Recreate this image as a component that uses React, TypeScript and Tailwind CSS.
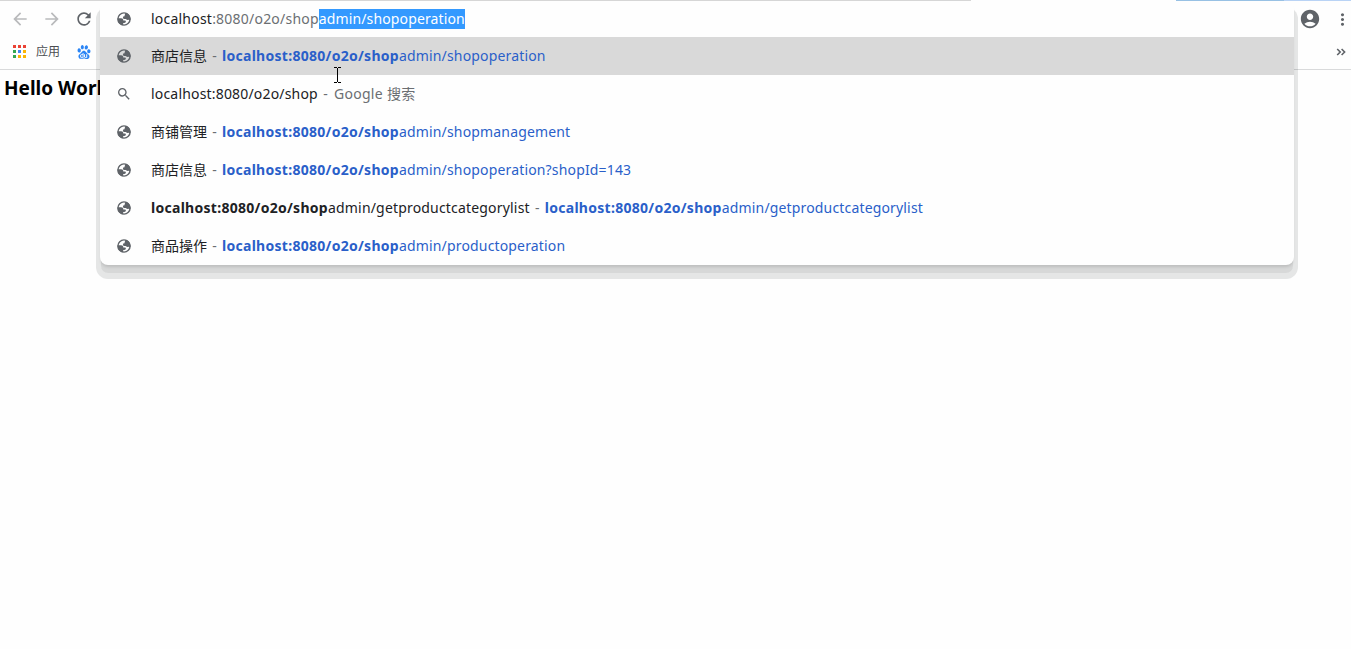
import type { ReactNode } from "react"
import {
  MdAccountCircle,
  MdArrowBack,
  MdArrowForward,
  MdMoreVert,
  MdRefresh,
  MdSearch,
} from "react-icons/md"
import { SiBaidu } from "react-icons/si"

type Suggestion = {
  id: number
  kind: "page" | "search"
  title: string
  titleMatch?: string
  url?: string
  note?: string
}

const typed = "localhost:8080/o2o/shop"

const suggestions: Suggestion[] = [
  { id: 1, kind: "page", title: "商店信息", url: "admin/shopoperation" },
  { id: 2, kind: "search", title: typed, note: "Google 搜索" },
  { id: 3, kind: "page", title: "商铺管理", url: "admin/shopmanagement" },
  { id: 4, kind: "page", title: "商店信息", url: "admin/shopoperation?shopId=143" },
  {
    id: 5,
    kind: "page",
    title: "admin/getproductcategorylist",
    titleMatch: typed,
    url: "admin/getproductcategorylist",
  },
  { id: 6, kind: "page", title: "商品操作", url: "admin/productoperation" },
]

const appColors = [
  "bg-[#ea4335]", "bg-[#ea4335]", "bg-[#ea4335]",
  "bg-[#34a853]", "bg-[#4285f4]", "bg-[#fbb505]",
  "bg-[#34a853]", "bg-[#fbb505]", "bg-[#fbb505]",
]

function GlobeIcon() {
  return (
    <svg viewBox="0 0 16 16" className="size-4">
      <circle cx="8" cy="8" r="6.1" fill="none" stroke="#5f6368" strokeWidth="1.4" />
      <path
        fill="#5f6368"
        d="M9.6 1.8c2.9.7 4.9 3.2 4.9 6.2l-.3 1.3-1.9-.5-1.1.3-1.5-1-1.9-.1-.9-1 .3-1.4 1.3-.4.2-1.3z"
      />
      <path
        fill="#5f6368"
        d="M1.6 7.2h3.5c1.5 0 2.2.8 2.2 2.2h1.4c.7 0 1.2.5 1.2 1.2 0 .9-.6 1.4-1.6 1.4H7.2v2.3C3.8 14 1.4 11.3 1.6 7.2z"
      />
    </svg>
  )
}

function Separator() {
  return <span className="w-[15px] shrink-0 text-center text-[#6b6e72]">-</span>
}

function Match({ children }: { children: ReactNode }) {
  return <b className="inline-block w-[177px] font-bold tracking-[0.28px]">{children}</b>
}

function SuggestionRow({ item, active }: { item: Suggestion; active: boolean }) {
  return (
    <li className={active ? "flex h-[38px] items-center bg-[#d9d9d9] pl-4" : "flex h-[38px] items-center pl-4"}>
      <span className="mr-[19px] flex size-4 items-center justify-center">
        {item.kind === "page" ? <GlobeIcon /> : <MdSearch className="size-4 text-[#5f6368]" />}
      </span>
      <div className="flex pb-[2px]">
        <span className={item.kind === "page" && !item.titleMatch ? "text-[#202124]" : "flex tracking-[0.18px] text-[#202124]"}>
          {item.titleMatch && <Match>{item.titleMatch}</Match>}
          {item.title}
        </span>
        <Separator />
        {item.note && <span className="ml-px tracking-[0.3px] text-[#6b6e72]">{item.note}</span>}
        {item.url && (
          <span className="flex tracking-[0.16px] text-[#2a5fc9]">
            <Match>{typed}</Match>
            {item.url}
          </span>
        )}
      </div>
    </li>
  )
}

function Omnibox() {
  return (
    <div className="absolute top-px left-[100px] h-[264px] w-[1194px] rounded-[8px] bg-[#fefefe] text-[14px] whitespace-nowrap shadow-[0_3px_3px_-1px_rgba(0,0,0,0.12),0_9px_0_-1px_rgba(0,0,0,0.06),0_10px_0_4px_rgba(6,20,16,0.1)]">
      <div className="flex h-9 items-center pl-4 text-[#202124]">
        <span className="mr-[19px]">
          <GlobeIcon />
        </span>
        <div className="flex items-center tracking-[0.22px]">
          <span className="pb-[2px]">localhost</span>
          <span className="pb-[2px] text-[#6b6e72]">:8080/o2o/shop</span>
          <span className="flex h-5 items-center bg-[#3399ff] pb-[2px] tracking-[0.13px] text-white">
            admin/shopoperation
          </span>
        </div>
      </div>
      <ul>
        {suggestions.map((item, i) => (
          <SuggestionRow key={item.id} item={item} active={i === 0} />
        ))}
      </ul>
    </div>
  )
}

function BookmarksBar() {
  return (
    <div className="flex h-8 items-center pb-[3px] pl-[13px] text-[12px] text-[#4a4d51]">
      <div className="grid grid-cols-3 gap-[2px]">
        {appColors.map((color, i) => (
          <span key={i} className={`size-[3px] ${color}`} />
        ))}
      </div>
      <span className="ml-[10px]">应用</span>
      <SiBaidu className="ml-[17px] size-[14px] text-[#2b85f5]" />
      <svg viewBox="0 0 10 8" className="mr-[5px] ml-auto h-2 w-[10px]" fill="none" stroke="#5f6368" strokeWidth="1.6">
        <path d="M1.2 1l3 3-3 3M5.6 1l3 3-3 3" />
      </svg>
    </div>
  )
}

export default function App() {
  return (
    <div className="relative h-[649px] w-[1351px] overflow-hidden bg-[#fefefe] font-['Noto_Sans','Noto_Sans_CJK_SC',sans-serif]">
      {/* bottom edge of the tab strip */}
      <div className="flex h-px">
        <span className="w-[971px] bg-[#d6d6d6]" />
        <span className="w-[205px]" />
        <span className="w-[108px] bg-[#98c1e4]" />
        <span className="flex-1 bg-[#b9d3f5]" />
      </div>
      <header className="border-b border-[#d9dadb]">
        <div className="flex h-9 items-center pl-[10px] text-[#5f6368]">
          <MdArrowBack className="size-5 text-[#b9babc]" />
          <MdArrowForward className="ml-3 size-5 text-[#b9babc]" />
          <MdRefresh className="ml-3 size-5" />
          <MdAccountCircle className="ml-auto size-[22px]" />
          <MdMoreVert className="-mr-px ml-3 size-[19px]" />
        </div>
        <BookmarksBar />
      </header>
      <main className="px-1 pt-1">
        <h2 className="text-[19px] leading-7 font-bold text-black">Hello World!</h2>
      </main>
      <Omnibox />
      <svg viewBox="0 0 7 16" className="absolute top-[67px] left-[334px] h-4 w-[7px]" fill="none" stroke="#000" shapeRendering="crispEdges">
        <path d="M0 .5h3M4 .5h3M3.5 1v14M0 15.5h3M4 15.5h3" />
      </svg>
    </div>
  )
}
